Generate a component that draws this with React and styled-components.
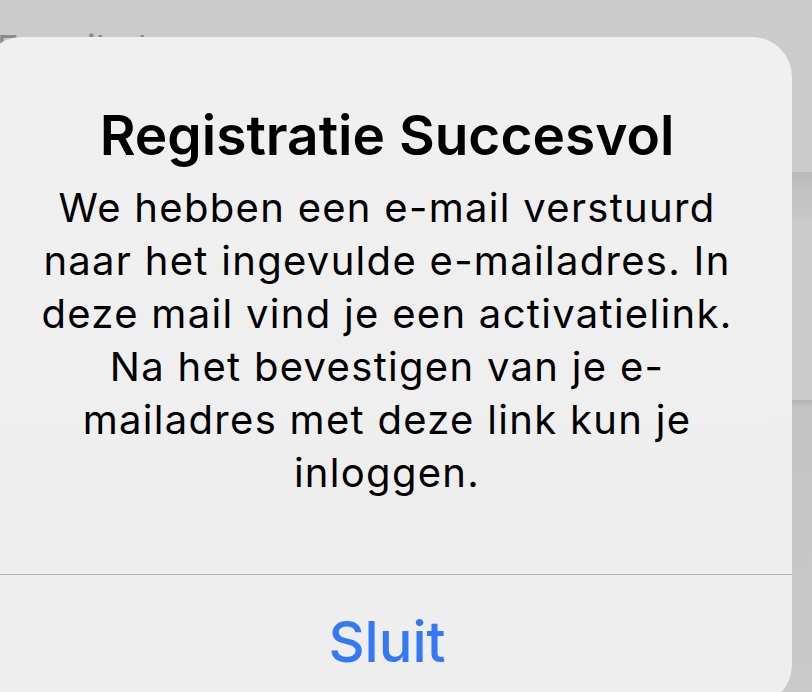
import React from 'react';
import styled, { createGlobalStyle } from 'styled-components';

const GlobalStyle = createGlobalStyle`
	html, body {
		margin: 0;
		padding: 0;
		background: #cbcbcb;
		overflow: hidden;
	}
`;

const Screen = styled.div`
	position: relative;
	width: 812px;
	height: 692px;
	overflow: hidden;
	background: #cbcbcb;
	display: flex;
	flex-direction: column;
	font-family: Inter, "Liberation Sans", sans-serif;
`;

// the login form behind the alert, mostly hidden
const FieldLabel = styled.div`
	margin: 28px 0 0 -3px;
	font-size: 36px;
	line-height: 40px;
	color: #8a8a8a;
`;

const FormCard = styled.div`
	margin-top: ${p => p.$offset}px;
	height: ${p => (p.$height ? `${p.$height}px` : 'auto')};
	flex: ${p => (p.$height ? 'none' : 1)};
	background: ${p => p.$shade};
`;

const Alert = styled.div`
	position: absolute;
	left: -18px;
	top: 37px;
	width: 810px;
	height: 668px;
	border-radius: 40px;
	background: linear-gradient(180deg, #f0f0f0 0%, #eeeeee 100%);
	display: flex;
	flex-direction: column;
	overflow: hidden;
`;

const AlertBody = styled.div`
	flex: 1;
	padding: 66px 49px 0;
	display: flex;
	flex-direction: column;
	align-items: center;
	text-align: center;
	color: #000;
`;

const Title = styled.h2`
	margin: 0;
	font-size: 55px;
	line-height: 64px;
	font-weight: 600;
`;

const Message = styled.p`
	margin: 14px 0 0;
	max-width: 712px;
	font-size: 40px;
	line-height: 53px;
	font-weight: 400;
	letter-spacing: 1.3px;
`;

const ActionButton = styled.button`
	height: 131px;
	padding: 3px 0 0;
	border: none;
	border-top: 1px solid #b3b3b3;
	background: transparent;
	color: #3478f6;
	font-family: Inter, "Liberation Sans", sans-serif;
	font-size: 56px;
	font-weight: 500;
	cursor: pointer;
`;

const App = () => (
	<>
		<GlobalStyle />
		<Screen>
			<FieldLabel>E-mailadres</FieldLabel>
			<FormCard $offset={104} $height={48} $shade="linear-gradient(180deg, #b9b9b9 0%, #c2c2c2 40%, #c7c7c7 100%)" />
			<FormCard $offset={180} $shade="linear-gradient(180deg, #b3b3b3 0px, #c4c4c4 8px, #c9c9c9 100%)" />
			<Alert role="alertdialog">
				<AlertBody>
					<Title>Registratie Succesvol</Title>
					<Message>
						We hebben een e-mail verstuurd naar het ingevulde e-mailadres. In deze mail vind je een activatielink. Na het bevestigen van je e-mailadres met deze link kun je inloggen.
					</Message>
				</AlertBody>
				<ActionButton>Sluit</ActionButton>
			</Alert>
		</Screen>
	</>
);

export default App;
